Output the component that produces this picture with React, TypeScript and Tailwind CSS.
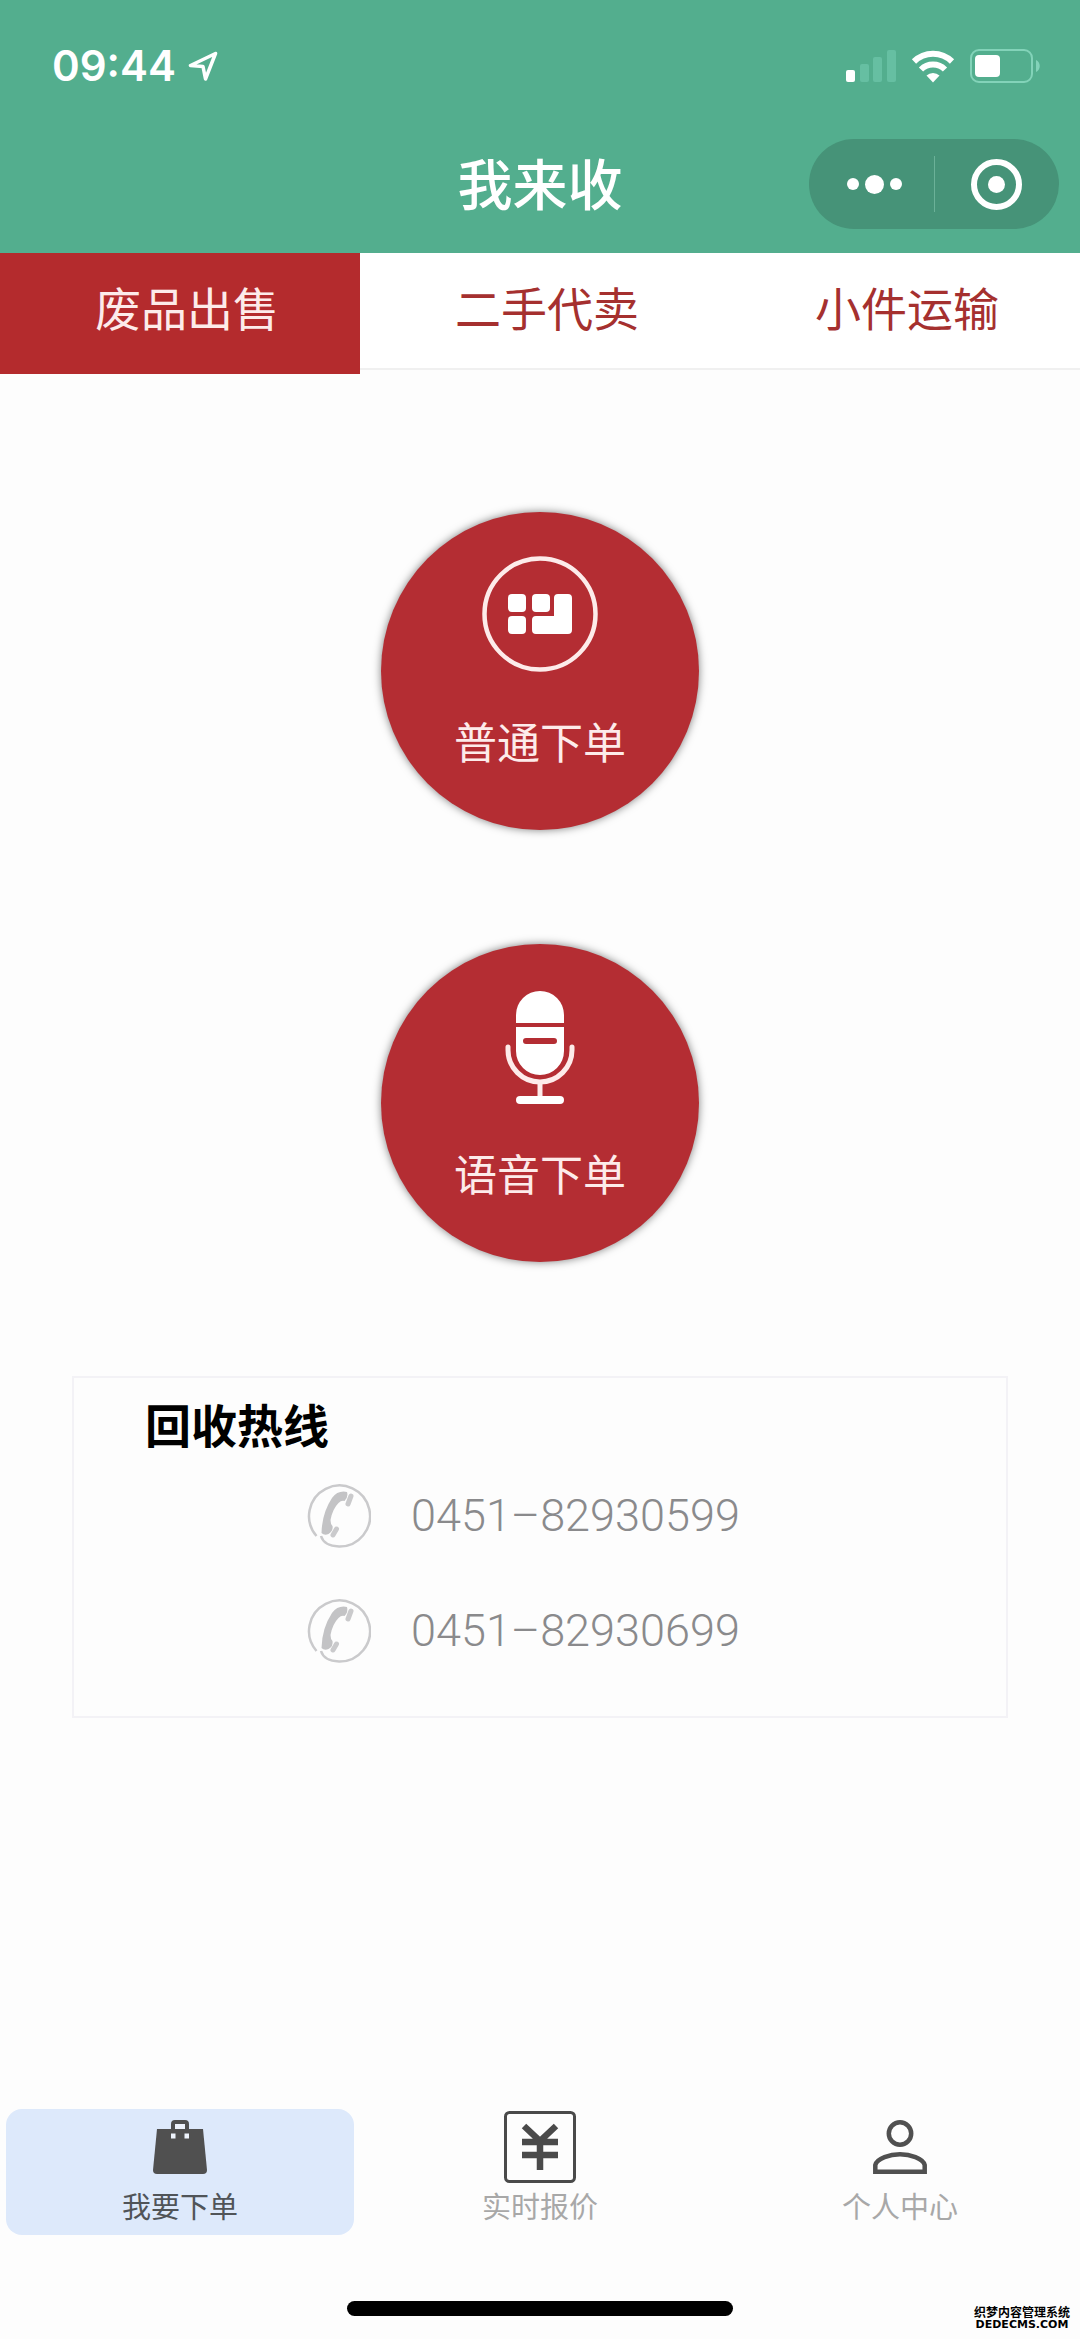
import React, { useState } from 'react';

// --- Icons ---
const LocationIcon: React.FC = () => (
    <svg width="30" height="30" viewBox="0 0 30 30" fill="none" stroke="currentColor" strokeWidth="3.5" strokeLinejoin="round" aria-hidden="true">
        <path d="M27.5 2.5 2.5 14.5 15 15.5 17.5 28Z" />
    </svg>
);

const SignalIcon: React.FC = () => (
    <svg width="50" height="32" viewBox="0 0 50 32" aria-hidden="true">
        <rect x="0" y="20" width="9" height="12" rx="2" fill="#fff" />
        <rect x="14" y="14" width="9" height="18" rx="2" fill="#66bfa2" />
        <rect x="27" y="7" width="9" height="25" rx="2" fill="#66bfa2" />
        <rect x="41" y="0" width="9" height="32" rx="2" fill="#66bfa2" />
    </svg>
);

const WifiIcon: React.FC = () => (
    <svg width="44" height="34" viewBox="0 0 44 34" fill="none" stroke="#fff" strokeWidth="6" aria-hidden="true">
        <path d="M3 12.5a27 27 0 0 1 38 0" />
        <path d="M10 20.5a17 17 0 0 1 24 0" />
        <path d="M15.5 26.5a9.5 9.5 0 0 1 13 0L22 33.5Z" fill="#fff" stroke="none" />
    </svg>
);

const BatteryIcon: React.FC = () => (
    <svg width="70" height="34" viewBox="0 0 70 34" aria-hidden="true">
        <rect x="1" y="1" width="61" height="32" rx="8" fill="none" stroke="#83d3b9" strokeWidth="2" />
        <rect x="5" y="6" width="25" height="22" rx="4" fill="#fff" />
        <path d="M66 11c5 2 5 10 0 12Z" fill="#83d3b9" />
    </svg>
);

const GridCircleIcon: React.FC = () => (
    <svg width="116" height="116" viewBox="0 0 116 116" fill="#fff" aria-hidden="true">
        <circle cx="58" cy="58" r="55.5" fill="none" stroke="#fdebea" strokeWidth="4.5" />
        <rect x="26" y="38" width="18" height="18" rx="4" />
        <rect x="50" y="38" width="18" height="18" rx="4" />
        <rect x="26" y="60" width="18" height="18" rx="4" />
        <path d="M76 38h10q4 0 4 4v32q0 4-4 4H54q-4 0-4-4V64q0-4 4-4h18V42q0-4 4-4Z" />
    </svg>
);

const MicIcon: React.FC = () => (
    <svg width="116" height="116" viewBox="0 0 116 116" fill="#fff" aria-hidden="true">
        <path d="M34 35V27a24 24 0 0 1 48 0v8Z" />
        <path fillRule="evenodd" d="M34 39H82V63a24 24 0 0 1-48 0ZM44 50q-3 0-3 3t3 3H72q3 0 3-3t-3-3Z" />
        <path d="M26 59V62a32 32 0 0 0 64 0V59" fill="none" stroke="#fdebea" strokeWidth="5" strokeLinecap="round" />
        <path d="M58 94v15" stroke="#fdebea" strokeWidth="5" />
        <rect x="34" y="108" width="48" height="8" rx="4" />
    </svg>
);

const PhoneIcon: React.FC = () => (
    <svg width="64" height="64" viewBox="0 0 64 64" fill="#c3c3c5" aria-hidden="true">
        <path d="M9.5 52A30.5 30.5 0 1 1 32 62.5Q17 62 14 52" fill="none" stroke="#cacacc" strokeWidth="2.5" />
        <path d="M40 8Q31 6 25 14 15 29 14.5 49q3 3 7 1 5-3 4-8-2-2-2-6 2-11 8-17 3-3 6-2 4-4 2.5-9Z" />
        <path d="M44 12 41 20M29.5 45 26 51" fill="none" stroke="#cacacc" strokeWidth="5" strokeLinecap="round" />
    </svg>
);

const BagIcon: React.FC = () => (
    <svg width="54" height="54" viewBox="0 0 54 54" aria-hidden="true">
        <path d="M4 9H50L54 50q0 4-4 4H4q-4 0-4-4Z" fill="#505050" />
        <path d="M20 16V4q0-2 2-2H32q2 0 2 2v12" fill="none" stroke="#505050" strokeWidth="4" />
        <path d="M22 4H32V9H22ZM18 13.5H22.5V18.5H18ZM31.5 13.5H36V18.5H31.5Z" fill="#eef3fc" />
    </svg>
);

const YenIcon: React.FC = () => (
    <svg width="72" height="72" viewBox="0 0 72 72" fill="none" stroke="#4a4a4a" aria-hidden="true">
        <rect x="1.5" y="1.5" width="69" height="69" rx="4" strokeWidth="3" />
        <path d="M20 15 36 30 52 15M36 29V59M18 31H54M18 44H54" strokeWidth="6.5" />
    </svg>
);

const PersonIcon: React.FC = () => (
    <svg width="54" height="54" viewBox="0 0 54 54" fill="none" stroke="#505050" strokeWidth="4.5" aria-hidden="true">
        <circle cx="27" cy="13.5" r="11.2" />
        <path d="M2.3 51.7V45C4 38 17 34.3 27 34.3S50 38 51.7 45V51.7Z" />
    </svg>
);

// --- Page data ---
const TABS = ['废品出售', '二手代卖', '小件运输'];

const ORDER_TYPES = [
    { label: '普通下单', Icon: GridCircleIcon },
    { label: '语音下单', Icon: MicIcon },
];

const HOTLINES = ['0451–82930599', '0451–82930699'];

const NAV_ITEMS = [
    { label: '我要下单', Icon: BagIcon },
    { label: '实时报价', Icon: YenIcon },
    { label: '个人中心', Icon: PersonIcon },
];

// --- Header with status bar and title ---
const Header: React.FC = () => (
    <header className="bg-[#53ae8e] text-white pb-[17px]">
        <div className="flex items-center justify-between h-[132px] pl-[52px] pr-10">
            <div className="flex items-center gap-3">
                <span className="font-['Inter',sans-serif] text-[42px] leading-none font-semibold">09:44</span>
                <LocationIcon />
            </div>
            <div className="flex items-center gap-[15px]">
                <SignalIcon />
                <WifiIcon />
                <BatteryIcon />
            </div>
        </div>
        <div className="grid grid-cols-[1fr_auto_1fr] items-center h-[104px]">
            <h1 className="col-start-2 pb-1.5 text-[55px] leading-[80px] font-medium">我来收</h1>
            <div className="justify-self-end flex items-center w-[250px] h-[90px] mr-[21px] rounded-full bg-[#469378]">
                <button type="button" aria-label="更多" className="flex w-1/2 items-center justify-center gap-1.5 h-full pl-1.5">
                    <span className="size-3 rounded-full bg-white" />
                    <span className="size-[19px] rounded-full bg-white" />
                    <span className="size-3 rounded-full bg-white" />
                </button>
                <span className="w-px h-14 bg-[#6bb198]" />
                <button type="button" aria-label="关闭" className="flex w-1/2 items-center justify-center h-full">
                    <span className="flex items-center justify-center size-[51px] rounded-full border-6 border-white">
                        <span className="size-[17px] rounded-full bg-white" />
                    </span>
                </button>
            </div>
        </div>
    </header>
);

// --- Hotline card ---
const HotlineCard: React.FC = () => (
    <section className="mx-[72px] mt-[114px] pt-3.5 pb-7 border-2 border-[#f3f2f6]">
        <h2 className="pl-[71px] pb-1 text-[46px] leading-[62px] font-bold text-black">回收热线</h2>
        <ul className="pl-[25%]">
            {HOTLINES.map((number) => (
                <li key={number} className="flex items-center h-[115px]">
                    <a href={`tel:${number.replace('–', '-')}`} className="flex items-center gap-10 font-['Roboto',sans-serif] text-[45px] leading-none font-light text-[#8a8a8c]">
                        <PhoneIcon />
                        {number}
                    </a>
                </li>
            ))}
        </ul>
    </section>
);

const App: React.FC = () => {
    const [activeTab, setActiveTab] = useState(0);
    const [activeNav, setActiveNav] = useState(0);

    return (
        <div className="flex flex-col min-h-screen bg-[#fdfdfd] font-['Noto_Sans_CJK_SC',sans-serif]">
            <Header />

            <div role="tablist" className="grid grid-cols-3 items-start h-[117px] bg-white border-b-2 border-[#f0f0f0]">
                {TABS.map((tab, i) => (
                    <button
                        key={tab}
                        type="button"
                        role="tab"
                        aria-selected={i === activeTab}
                        onClick={() => setActiveTab(i)}
                        className={`h-[121px] pt-5 pb-9 pl-3.5 text-[46px] leading-[64px] ${i === activeTab ? 'bg-[#b42b2d] text-[#fdebea]' : 'text-[#a5302f]'}`}
                    >
                        {tab}
                    </button>
                ))}
            </div>

            <main className="flex-grow">
                <div className="flex flex-col items-center gap-[114px] mt-[142px]">
                    {ORDER_TYPES.map(({ label, Icon }) => (
                        <button key={label} type="button" className="flex flex-col items-center gap-[38px] size-[318px] pt-11 rounded-full bg-[#b42d33] shadow-[0_0_9px_rgba(0,0,0,0.5)]">
                            <Icon />
                            <span className="text-[43px] leading-[60px] text-[#fdebea]">{label}</span>
                        </button>
                    ))}
                </div>
                <HotlineCard />
            </main>

            <nav className="grid grid-cols-3">
                {NAV_ITEMS.map(({ label, Icon }, i) => (
                    <button
                        key={label}
                        type="button"
                        onClick={() => setActiveNav(i)}
                        className={`flex flex-col items-center h-[126px] mx-1.5 pt-0.5 rounded-2xl text-[29px] leading-[44px] ${i === activeNav ? 'bg-[#dde9fb] text-[#505458]' : 'text-[#a8a8a8]'}`}
                    >
                        <span className="flex items-center justify-center h-[72px]">
                            <Icon />
                        </span>
                        {label}
                    </button>
                ))}
            </nav>

            <footer className="relative flex justify-center pt-[66px] pb-[23px]">
                <div className="w-[386px] h-[15px] rounded-full bg-black" />
                <div className="absolute right-2.5 bottom-2 text-center text-black font-bold">
                    <p className="text-[12px] leading-[14px]">织梦内容管理系统</p>
                    <p className="font-['DejaVu_Sans',sans-serif] text-[11px] leading-[12px]">DEDECMS.COM</p>
                </div>
            </footer>
        </div>
    );
};

export default App;
